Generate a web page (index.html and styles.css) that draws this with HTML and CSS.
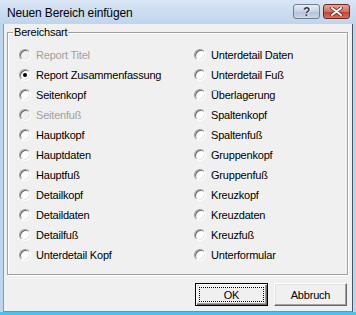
FILE: index.html
```html
<!DOCTYPE html>
<html lang="de">
<head>
    <meta charset="UTF-8">
    <title>Neuen Bereich einfügen</title>
    <link rel="stylesheet" href="styles.css">
</head>
<body>
    <div class="window">
        <div class="titlebar">
            <span class="title">Neuen Bereich einfügen</span>
            <div class="caption-buttons">
                <span class="cap-btn help">?</span>
                <span class="cap-btn close">
                    <svg width="13" height="9" viewBox="0 0 13 9">
                        <path d="M2 1 L11 8 M11 1 L2 8" stroke="#5a1e18" stroke-width="3.4" stroke-linecap="round"/>
                        <path d="M2 1 L11 8 M11 1 L2 8" stroke="#fff" stroke-width="2" stroke-linecap="round"/>
                    </svg>
                </span>
            </div>
        </div>

        <div class="client">
            <div class="group">
                <span class="group-label">Bereichsart</span>
                <div class="options">
                    <div class="column">
                        <div class="option disabled"><span class="radio"></span>Report Titel</div>
                        <div class="option"><span class="radio checked"></span>Report Zusammenfassung</div>
                        <div class="option"><span class="radio"></span>Seitenkopf</div>
                        <div class="option disabled"><span class="radio"></span>Seitenfuß</div>
                        <div class="option"><span class="radio"></span>Hauptkopf</div>
                        <div class="option"><span class="radio"></span>Hauptdaten</div>
                        <div class="option"><span class="radio"></span>Hauptfuß</div>
                        <div class="option"><span class="radio"></span>Detailkopf</div>
                        <div class="option"><span class="radio"></span>Detaildaten</div>
                        <div class="option"><span class="radio"></span>Detailfuß</div>
                        <div class="option"><span class="radio"></span>Unterdetail Kopf</div>
                    </div>
                    <div class="column">
                        <div class="option"><span class="radio"></span>Unterdetail Daten</div>
                        <div class="option"><span class="radio"></span>Unterdetail Fuß</div>
                        <div class="option"><span class="radio"></span>Überlagerung</div>
                        <div class="option"><span class="radio"></span>Spaltenkopf</div>
                        <div class="option"><span class="radio"></span>Spaltenfuß</div>
                        <div class="option"><span class="radio"></span>Gruppenkopf</div>
                        <div class="option"><span class="radio"></span>Gruppenfuß</div>
                        <div class="option"><span class="radio"></span>Kreuzkopf</div>
                        <div class="option"><span class="radio"></span>Kreuzdaten</div>
                        <div class="option"><span class="radio"></span>Kreuzfuß</div>
                        <div class="option"><span class="radio"></span>Unterformular</div>
                    </div>
                </div>
            </div>

            <div class="buttons">
                <button class="btn default"><span class="focus">OK</span></button>
                <button class="btn">Abbruch</button>
            </div>
        </div>
    </div>
</body>
</html>
```

FILE: styles.css
```css
body {
    margin: 0;
    font-family: "Liberation Sans", Arial, sans-serif;
    font-size: 11px;
    letter-spacing: -0.2px;
    color: #000;
}
.window {
    width: 356px;
    height: 315px;
    box-sizing: border-box;
    padding: 0 3px 0 3px;
    background: #bfd5ee;
    border-bottom: 3px solid #4cc3e6;
    display: flex;
    flex-direction: column;
}
.titlebar {
    height: 24px;
    margin: 0 -3px;
    padding: 0 6px 0 7px;
    display: flex;
    align-items: flex-start;
    justify-content: space-between;
    background: linear-gradient(#d9e6f5, #bfd4ed);
}
.title {
    margin-top: 5px;
    font-size: 12px;
    letter-spacing: -0.15px;
    line-height: 16px;
}
.caption-buttons {
    display: flex;
    gap: 3px;
    margin-top: 4px;
}
.cap-btn {
    width: 25px;
    height: 13px;
    border: 1px solid #6f7f94;
    border-radius: 3px;
    display: flex;
    align-items: center;
    justify-content: center;
}
.help {
    background: linear-gradient(#e6edf6, #c5d2e2 50%, #b3c3d8 51%, #c9d6e6);
    font-weight: bold;
    font-size: 12px;
    color: #2b3a4f;
    text-shadow: 0 0 1px #fff, 1px 0 0 #fff;
}
.close {
    border-color: #6a2a23;
    background: linear-gradient(#e6a598, #d2705f 50%, #c0402f 51%, #d2735e);
}
.client {
    flex: 1;
    background: #f0f0f0;
    border-left: 1px solid #7c9cc4;
    border-right: 1px solid #4f5560;
    border-bottom: 1px solid #3aa6cc;
    display: flex;
    flex-direction: column;
}
.group {
    position: relative;
    height: 243px;
    box-sizing: border-box;
    margin: 8px 4px 0 3px;
    padding: 12px 0 0 11px;
    border: 1px solid #a0a0a0;
    box-shadow: inset 1px 1px 0 #fff, 1px 1px 0 #fff;
}
.group-label {
    position: absolute;
    top: -7px;
    left: 5px;
    padding: 0 1px;
    line-height: 13px;
    background: #f0f0f0;
}
.options {
    display: grid;
    grid-template-columns: 175px auto;
}
.option {
    height: 20px;
    display: flex;
    align-items: center;
    gap: 5px;
    white-space: nowrap;
}
.option.disabled {
    color: #a0a0a0;
}
.radio {
    width: 12px;
    height: 12px;
    box-sizing: border-box;
    border-radius: 50%;
    border: 1px solid;
    border-color: #a0a0a0 #ffffff #ffffff #a0a0a0;
    background: #fff;
    box-shadow: inset 1px 1px 0 #696969, inset -1px -1px 0 #e3e3e3;
    display: flex;
    align-items: center;
    justify-content: center;
}
.disabled .radio {
    background: #f0f0f0;
}
.radio.checked::after {
    content: "";
    width: 4px;
    height: 4px;
    border-radius: 50%;
    background: #000;
}
.buttons {
    display: flex;
    justify-content: flex-end;
    gap: 6px;
    margin: 8px 5px 0 0;
}
.btn {
    width: 73px;
    height: 23px;
    padding: 0;
    font-family: "Liberation Sans", Arial, sans-serif;
    font-size: 11px;
    letter-spacing: -0.2px;
    color: #000;
    background: #f0f0f0;
    border: 1px solid;
    border-color: #fff #696969 #696969 #fff;
    box-shadow: inset -1px -1px 0 #a0a0a0, inset 1px 1px 0 #e3e3e3;
}
.btn.default {
    border: 1px solid #000;
    box-shadow: inset 1px 1px 0 #fff, inset -1px -1px 0 #696969, inset -2px -2px 0 #a0a0a0;
    display: flex;
    padding: 3px;
}
.focus {
    flex: 1;
    display: flex;
    align-items: center;
    justify-content: center;
    outline: 1px dotted #000;
    outline-offset: -1px;
}
```
